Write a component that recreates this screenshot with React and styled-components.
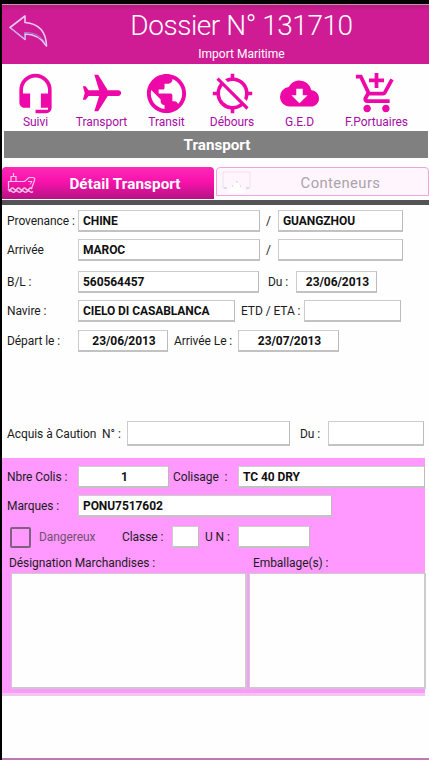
import React, { useState } from "react";
import styled, { createGlobalStyle } from "styled-components";
import {
  MdHeadsetMic,
  MdFlight,
  MdPublic,
  MdLocationDisabled,
  MdCloudDownload,
  MdAddShoppingCart
} from "react-icons/md";

const GlobalStyle = createGlobalStyle`
  * {
    box-sizing: border-box;
  }

  body {
    margin: 0;
    background: #000;
    font-family: Roboto, "Liberation Sans", sans-serif;
  }
`;

const Screen = styled.div`
  display: flex;
  flex-direction: column;
  height: 760px;
  padding: 4px 0 0 2px;
  overflow: hidden;
`;

const Page = styled.div`
  flex: 1;
  display: flex;
  flex-direction: column;
  background: #fefefe;
  border-bottom: 2px solid #bf78b0;
`;

// HEADER

const Header = styled.header`
  display: grid;
  grid-template-columns: 52px 1fr;
  height: 60px;
  color: #fff;
  background: linear-gradient(#b51c80, #d01c94 6px);
  border-top: 1px solid #c890b4;
`;

const BackButton = styled.button`
  display: block;
  width: 40px;
  height: 34px;
  margin: 9px 0 0 6px;
  padding: 0;
  background: none;
  border: 0;
`;

const Heading = styled.div`
  text-align: center;
`;

const Title = styled.h1`
  margin: 3px 0 0;
  font-size: 28px;
  font-weight: 300;
  line-height: 36px;
  letter-spacing: -0.45px;
  white-space: nowrap;
`;

const Subtitle = styled.div`
  margin-top: 3px;
  font-size: 12px;
  line-height: 14px;
`;

// MENU

const Menu = styled.nav`
  display: grid;
  grid-template-columns: 67px 65px 65px 66px 69px 1fr;
  height: 67px;
  padding-right: 10px;
`;

const MenuItem = styled.a`
  display: flex;
  flex-direction: column;
  align-items: center;
  color: #a80ca4;
  font-size: 12px;
  line-height: 14px;
  letter-spacing: -0.05px;
  white-space: nowrap;
`;

const MenuIcon = styled.span`
  display: flex;
  align-items: center;
  justify-content: center;
  height: 50px;
  margin-top: 4px;
  margin-bottom: -3px;
  color: #ee08a8;

  svg {
    flex: none;
    width: ${p => p.$size}px;
    height: ${p => p.$size}px;
    transform: ${p => (p.$turned ? "translateY(1px) rotate(90deg)" : "none")};
  }
`;

const Section = styled.h2`
  height: 27px;
  margin: 0 1px 0 2px;
  padding-left: 2px;
  color: #fff;
  background: #808080;
  font-size: 15.2px;
  font-weight: 700;
  line-height: 28px;
  text-align: center;
`;

// TABS

const Tabs = styled.div`
  display: grid;
  grid-template-columns: 212px 1fr;
  height: 42px;
  padding-top: 9px;
`;

const Tab = styled.button`
  display: grid;
  grid-template-columns: 43px 1fr;
  align-items: center;
  height: ${p => (p.$active ? 32 : 29)}px;
  margin-left: ${p => (p.$active ? 0 : 2)}px;
  padding: 0 0 0 5px;
  color: ${p => (p.$active ? "#fff" : "#aaa4aa")};
  background: ${p =>
    p.$active ? "linear-gradient(#fb2bb5, #fa12ad 45%, #b41383)" : "#fff5fd"};
  border: ${p => (p.$active ? "0" : "1.5px solid #f0a5dc")};
  border-radius: 4px 4px 0 0;
  font-family: inherit;
  font-size: ${p => (p.$active ? 15.2 : 14.8)}px;
  font-weight: ${p => (p.$active ? 700 : 400)};
  letter-spacing: ${p => (p.$active ? 0.1 : 0.4)}px;

  svg {
    display: block;
  }
`;

const TabLabel = styled.span`
  padding-right: ${p => p.$right}px;
  padding-top: 2px;
  text-align: center;
`;

const Strip = styled.div`
  height: 5px;
  background: #545456;
`;

// FORM

const Row = styled.div`
  display: grid;
  grid-template-columns: ${p => p.$cols};
  align-items: center;
  height: ${p => p.$height || 22}px;
  margin-top: ${p => p.$top}px;
  padding-left: 5px;
`;

const Label = styled.label`
  padding-left: ${p => p.$left || 0}px;
  color: ${p => p.$color || "#1c1c1c"};
  font-size: 12px;
  line-height: 16px;
  letter-spacing: -0.07px;
  white-space: pre;
`;

const Field = styled.output`
  display: block;
  height: 100%;
  padding: 0 ${p => (p.$center ? 0 : 4)}px 0 ${p => (p.$center ? 2 : 4)}px;
  overflow: hidden;
  color: #111;
  background: #fff;
  border: 1px solid #ccc;
  border-right-color: #bbb;
  border-bottom: 2px solid #c2c2c2;
  font-size: 12px;
  font-weight: 700;
  line-height: 21px;
  letter-spacing: -0.07px;
  text-align: ${p => (p.$center ? "center" : "left")};
  white-space: nowrap;
`;

const Goods = styled.section`
  width: 423px;
  height: 238px;
  margin-top: 12px;
  padding-top: 1px;
  background: #ff99ff;
  border-bottom: 3px solid #f0c8ee;
`;

const Checkbox = styled.button`
  width: 21px;
  height: 21px;
  margin-left: 3px;
  padding: 0;
  background: ${p => (p.$checked ? "#806080" : "transparent")};
  border: 2px solid #806080;
  border-radius: 2px;
`;

const Areas = styled.div`
  display: grid;
  grid-template-columns: 236px 177px;
  gap: 2px;
  height: 116px;
  margin-top: 1px;
  padding-left: 9px;
`;

const Area = styled.div`
  background: #fefefe;
  border: 1px solid #ccc;
  border-right-width: 2px;
  border-bottom: 2px solid #ccc8cc;
`;

const menu = [
  { label: "Suivi", icon: MdHeadsetMic, size: 43 },
  { label: "Transport", icon: MdFlight, size: 46, turned: true },
  { label: "Transit", icon: MdPublic, size: 47 },
  { label: "Débours", icon: MdLocationDisabled, size: 43 },
  { label: "G.E.D", icon: MdCloudDownload, size: 39 },
  { label: "F.Portuaires", icon: MdAddShoppingCart, size: 45 }
];

const BackArrow = () => (
  <svg width="40" height="34" viewBox="0 0 40 34" fill="none">
    <path
      d="M2 13.500 17 2v6.500c12 1 21 7 21.500 23.500-5-8-11-12-21.500-12V25.500Z"
      stroke="#eec8f4"
      strokeWidth="1.600"
      strokeLinejoin="round"
    />
    <path
      d="M3 14.500 16.500 24.500v-6C27 18.500 33 21.500 38 30.500"
      stroke="#90a0e8"
      strokeWidth="0.800"
    />
  </svg>
);

const ShipIcon = () => (
  <svg width="29" height="22" viewBox="0 0 29 22" fill="none" stroke="#fbc4ea">
    <path
      d="M4 9.500V4.500h5v5M6.500 4.500V1M1.500 16.500v-7h16l4.500-4h4q2.500.5 1.500 3l-3 8"
      strokeWidth="1.200"
    />
    <path d="M21 9.500h4l-2 3" />
    <path
      d="M1 17q1.500 2 3 0t3 0 3 0 3 0 3 0 3 0 3 0 3 0M2 19.500q1.500-1.500 3 0t3 0 3 0 3 0 3 0 3 0 3 0 3 0"
      strokeWidth="1.300"
    />
  </svg>
);

const ContainerIcon = () => (
  <svg width="29" height="22" viewBox="0 0 29 22" fill="none">
    <path d="M4 17H1V1h27v16h-3" stroke="#ebe2ea" />
    <path d="M14.500 10.500 23.500 22h-18Z" fill="#fff" />
    <path
      d="M2 17h3M24 17h3M14 11h1.500M10 15h1M18 15h1"
      stroke="#dcd4dc"
      strokeWidth="1.500"
    />
  </svg>
);

const App = () => {
  const [tab, setTab] = useState("detail");
  const [dangerous, setDangerous] = useState(false);

  return (
    <Screen>
      <GlobalStyle />
      <Page>
        <Header>
          <BackButton aria-label="Retour">
            <BackArrow />
          </BackButton>
          <Heading>
            <Title>Dossier N° 131710</Title>
            <Subtitle>Import Maritime</Subtitle>
          </Heading>
        </Header>

        <Menu>
          {menu.map(({ label, icon: Icon, size, turned }) => (
            <MenuItem key={label}>
              <MenuIcon $size={size} $turned={turned}>
                <Icon />
              </MenuIcon>
              {label}
            </MenuItem>
          ))}
        </Menu>

        <Section>Transport</Section>

        <Tabs>
          <Tab $active={tab === "detail"} onClick={() => setTab("detail")}>
            <ShipIcon />
            <TabLabel $right={14}>Détail Transport</TabLabel>
          </Tab>
          <Tab $active={tab === "boxes"} onClick={() => setTab("boxes")}>
            <ContainerIcon />
            <TabLabel $right={12}>Conteneurs</TabLabel>
          </Tab>
        </Tabs>
        <Strip />

        <Row $top={5} $cols="71px 182px 18px 125px">
          <Label>Provenance :</Label>
          <Field>CHINE</Field>
          <Label $left={6}>/</Label>
          <Field>GUANGZHOU</Field>
        </Row>
        <Row $top={7} $cols="71px 182px 18px 125px">
          <Label>Arrivée</Label>
          <Field>MAROC</Field>
          <Label $left={6}>/</Label>
          <Field />
        </Row>
        <Row $top={10} $cols="71px 181px 37px 81px">
          <Label>B/L :</Label>
          <Field>560564457</Field>
          <Label $left={9}>Du :</Label>
          <Field $center>23/06/2013</Field>
        </Row>
        <Row $top={7} $cols="71px 157px 69px 97px">
          <Label>Navire :</Label>
          <Field>CIELO DI CASABLANCA</Field>
          <Label $left={6}>ETD / ETA :</Label>
          <Field />
        </Row>
        <Row $top={8} $cols="71px 90px 70px 101px">
          <Label>Départ le :</Label>
          <Field $center>23/06/2013</Field>
          <Label $left={6}>Arrivée Le :</Label>
          <Field $center>23/07/2013</Field>
        </Row>
        <Row $top={69} $height={25} $cols="120px 163px 38px 96px">
          <Label>Acquis à Caution  N° :</Label>
          <Field />
          <Label $left={10}>Du :</Label>
          <Field />
        </Row>

        <Goods>
          <Row $top={7} $cols="71px 91px 69px 187px">
            <Label>Nbre Colis :</Label>
            <Field $center>1</Field>
            <Label $left={4}>Colisage  :</Label>
            <Field>TC 40 DRY</Field>
          </Row>
          <Row $top={7} $cols="71px 254px">
            <Label>Marques :</Label>
            <Field>PONU7517602</Field>
          </Row>
          <Row $top={9} $cols="32px 83px 50px 27px 39px 72px">
            <Checkbox
              role="checkbox"
              aria-checked={dangerous}
              aria-label="Dangereux"
              $checked={dangerous}
              onClick={() => setDangerous(!dangerous)}
            />
            <Label $color="#705070">Dangereux</Label>
            <Label>Classe :</Label>
            <Field />
            <Label $left={6}>U N :</Label>
            <Field />
          </Row>
          <Row $top={5} $height={19} $cols="244px 1fr">
            <Label $left={2}>Désignation Marchandises :</Label>
            <Label $left={2}>Emballage(s) :</Label>
          </Row>
          <Areas>
            <Area />
            <Area />
          </Areas>
        </Goods>
      </Page>
    </Screen>
  );
};

export default App;
